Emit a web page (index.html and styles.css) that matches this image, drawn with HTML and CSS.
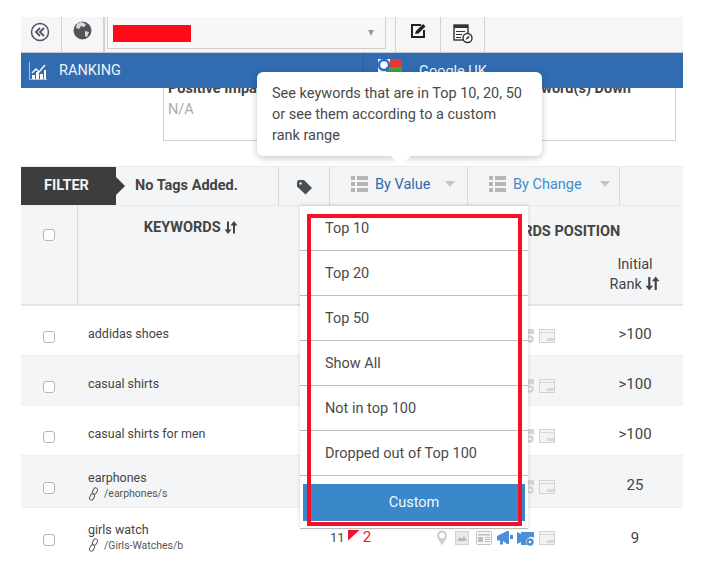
FILE: index.html
```html
<!DOCTYPE html>
<html lang="en">
<head>
  <meta charset="UTF-8" />
  <title>Ranking</title>
  <link rel="stylesheet" href="styles.css">
</head>
<body>
  <svg class="sprites" width="0" height="0">
    <symbol id="sort" viewBox="0 0 14 14">
      <path d="M3 1h2v8h2.500L4 13.500.5 9H3zM9 13V5H6.500L10 .5 13.500 5H11v8z" fill="currentColor"/>
    </symbol>
    <symbol id="link" viewBox="0 0 11 14">
      <g fill="none" stroke="#555" stroke-width="1">
        <rect x="5" y=".8" width="4" height="6.500" rx="2" transform="rotate(28 7 4)"/>
        <rect x="2" y="6.700" width="4" height="6.500" rx="2" transform="rotate(28 4 10)"/>
      </g>
    </symbol>
    <symbol id="list" viewBox="0 0 17 16">
      <path d="M0 0h4v4H0zM6 0h11v4H6zM0 6h4v4H0zM6 6h11v4H6zM0 12h4v4H0zM6 12h11v4H6z" fill="#b5b5b5"/>
    </symbol>
    <symbol id="pin" viewBox="0 0 12 16">
      <path d="M6 .5a5 5 0 0 1 5 5c0 3-3 6-5 10-2-4-5-7-5-10a5 5 0 0 1 5-5z" fill="#cfcfcf"/>
      <circle cx="6" cy="5.500" r="2.800" fill="#fff"/>
    </symbol>
    <symbol id="image" viewBox="0 0 14 14">
      <rect x=".5" y=".5" width="13" height="13" fill="#e9e9e9" stroke="#d2d2d2"/>
      <path d="M2 10l3-4 2 2 2-3 3 5z" fill="#b8b8b8"/>
    </symbol>
    <symbol id="news" viewBox="0 0 16 14">
      <rect x=".5" y=".5" width="15" height="13" rx="1" fill="#f6f6f6" stroke="#c4c4c4"/>
      <path d="M2 3h12v1.500H2zM2 6h5v5H2zM9 6h5v1H9zM9 8h5v1H9zM9 10h5v1H9z" fill="#bdbdbd"/>
    </symbol>
    <symbol id="horn" viewBox="0 0 16 14">
      <path d="M0 5l10-5h2v13h-2L6 10v3.500H3V9.500H0z" fill="currentColor"/>
      <path d="M13 4h3v4h-3z" fill="currentColor"/>
    </symbol>
    <symbol id="video" viewBox="0 0 17 15">
      <path d="M0 1l4 2V1h13v6a5 5 0 0 0-7 7H4v-3l-4 2z" fill="currentColor"/>
      <circle cx="13" cy="11" r="3.700" fill="currentColor"/>
      <circle cx="13" cy="11" r="1.300" fill="#fff"/>
    </symbol>
    <symbol id="window" viewBox="0 0 16 14">
      <rect x=".5" y=".5" width="15" height="13" fill="#f3f3f3" stroke="#d2d2d2"/>
      <path d="M1 3h14v1H1zM8 9h7v3H8z" fill="#d8d8d8"/>
    </symbol>
  </svg>

  <div class="app">
    <div class="toolbar">
      <div class="tool tool-back">
        <svg width="20" height="20" viewBox="0 0 20 20">
          <circle cx="10" cy="10" r="8.500" fill="none" stroke="#4d5560" stroke-width="1.500"/>
          <path d="M10 6l-4 4 4 4M14 6l-4 4 4 4" fill="none" stroke="#4d5560" stroke-width="1.800"/>
        </svg>
      </div>
      <div class="tool tool-globe">
        <svg width="19" height="19" viewBox="0 0 19 19">
          <circle cx="9.500" cy="9.500" r="9" fill="#50555c"/>
          <path d="M8 1c2 1 4 1 5 3l-2 2-3-1-2 3-3-1 1-4zM12 10l4 1-2 5-2-1z" fill="#d8dade"/>
        </svg>
      </div>
      <div class="select-wrap">
        <div class="select-box">
          <span class="redacted"></span>
          <span class="caret caret-dark"></span>
        </div>
      </div>
      <div class="tool tool-edit">
        <svg width="17" height="17" viewBox="0 0 17 17">
          <path d="M1 2h10v2H3v10h10V8h2v8H1z" fill="#222"/>
          <path d="M6 9l7-7 2.500 2.500-7 7L5 12z" fill="#222"/>
        </svg>
      </div>
      <div class="tool tool-report">
        <svg width="20" height="20" viewBox="0 0 20 20">
          <rect x="1" y="1" width="14" height="15" fill="none" stroke="#333" stroke-width="1.400"/>
          <path d="M1 1h14v3H1zM3 7h9v1H3zM3 10h6v1H3zM3 13h5v1H3z" fill="#333"/>
          <circle cx="14.500" cy="14" r="4.500" fill="#fff" stroke="#333" stroke-width="1.400"/>
          <path d="M12.500 16l1.500-3 3-1.500-1.500 3z" fill="#333"/>
        </svg>
      </div>
    </div>

    <div class="bluebar">
      <div class="bar-ranking">
        <svg width="18" height="19" viewBox="0 0 18 19">
          <path d="M.5 1v17.500H18" fill="none" stroke="#a9c4e2"/>
          <path d="M3 12l4-4 3 3 6-7" fill="none" stroke="#fff" stroke-width="1.400"/>
          <path d="M3 14h3v4H3zM7 11h3v7H7zM11 13h3v5h-3zM15 9h2v9h-2z" fill="#fff"/>
        </svg>
        <span>RANKING</span>
      </div>
      <div class="bar-engine">
        <svg width="24" height="16" viewBox="0 0 24 16">
          <rect width="24" height="16" fill="#fff"/>
          <path d="M12 0h12v8H12z" fill="#e53935"/>
          <path d="M8 8h16v8H8z" fill="#43a047"/>
          <circle cx="6" cy="6" r="5" fill="none" stroke="#2a6fd0" stroke-width="2.500"/>
        </svg>
        <span>Google UK</span>
      </div>
    </div>

    <div class="summary">
      <div class="summary-card">
        <div>
          <div class="summary-title">Positive Impact</div>
          <div class="summary-value">N/A</div>
        </div>
        <div class="summary-title">Keyword(s) Down</div>
      </div>
    </div>

    <div class="filterbar">
      <div class="filter-label">FILTER</div>
      <div class="filter-tags">No Tags Added.</div>
      <div class="filter-tag-icon">
        <svg width="15" height="15" viewBox="0 0 15 15">
          <path d="M0 1.500L1.500 0H7l8 8-6.500 6.500-8.500-8z" fill="#4b4f55"/>
          <circle cx="3.500" cy="3.500" r="1.200" fill="#f4f5f7"/>
        </svg>
      </div>
      <div class="filter-drop filter-value">
        <svg class="list-icon"><use href="#list"/></svg>
        <span>By Value</span>
        <span class="caret"></span>
      </div>
      <div class="filter-drop filter-change">
        <svg class="list-icon"><use href="#list"/></svg>
        <span>By Change</span>
        <span class="caret"></span>
      </div>
    </div>

    <div class="table-head">
      <div class="cell-check head-check"><input type="checkbox" /></div>
      <div class="head-keywords">KEYWORDS <svg class="sort"><use href="#sort"/></svg></div>
      <div class="head-position">KEYWORDS POSITION</div>
      <div class="head-initial">Initial<br />Rank <svg class="sort sort-big"><use href="#sort"/></svg></div>
    </div>

    <div class="row">
      <div class="cell-check"><input type="checkbox" /></div>
      <div class="cell-keyword">addidas shoes</div>
      <div class="cell-position">
        <svg class="i-pin"><use href="#pin"/></svg><svg class="i-image"><use href="#image"/></svg><svg class="i-news"><use href="#news"/></svg><svg class="i-horn"><use href="#horn"/></svg><svg class="i-video"><use href="#video"/></svg><svg class="i-window"><use href="#window"/></svg>
      </div>
      <div class="cell-rank">&gt;100</div>
    </div>
    <div class="row row-alt">
      <div class="cell-check"><input type="checkbox" /></div>
      <div class="cell-keyword">casual shirts</div>
      <div class="cell-position">
        <svg class="i-pin"><use href="#pin"/></svg><svg class="i-image"><use href="#image"/></svg><svg class="i-news"><use href="#news"/></svg><svg class="i-horn"><use href="#horn"/></svg><svg class="i-video"><use href="#video"/></svg><svg class="i-window"><use href="#window"/></svg>
      </div>
      <div class="cell-rank">&gt;100</div>
    </div>
    <div class="row">
      <div class="cell-check"><input type="checkbox" /></div>
      <div class="cell-keyword">casual shirts for men</div>
      <div class="cell-position">
        <svg class="i-pin"><use href="#pin"/></svg><svg class="i-image"><use href="#image"/></svg><svg class="i-news"><use href="#news"/></svg><svg class="i-horn"><use href="#horn"/></svg><svg class="i-video"><use href="#video"/></svg><svg class="i-window"><use href="#window"/></svg>
      </div>
      <div class="cell-rank">&gt;100</div>
    </div>
    <div class="row row-alt row-tall">
      <div class="cell-check"><input type="checkbox" /></div>
      <div class="cell-keyword keyword-two">
        earphones
        <div class="keyword-url"><svg class="i-link"><use href="#link"/></svg>/earphones/s</div>
      </div>
      <div class="cell-position">
        <svg class="i-pin"><use href="#pin"/></svg><svg class="i-image"><use href="#image"/></svg><svg class="i-news"><use href="#news"/></svg><svg class="i-horn"><use href="#horn"/></svg><svg class="i-video"><use href="#video"/></svg><svg class="i-window"><use href="#window"/></svg>
      </div>
      <div class="cell-rank">25</div>
    </div>
    <div class="row row-tall row-last">
      <div class="cell-check"><input type="checkbox" /></div>
      <div class="cell-keyword keyword-two">
        girls watch
        <div class="keyword-url"><svg class="i-link"><use href="#link"/></svg>/Girls-Watches/b</div>
      </div>
      <div class="cell-position position-top">
        <div class="pos-change">11 <span class="flag"></span> <span class="pos-down">2</span></div>
        <svg class="i-pin"><use href="#pin"/></svg><svg class="i-image"><use href="#image"/></svg><svg class="i-news"><use href="#news"/></svg><svg class="i-horn"><use href="#horn"/></svg><svg class="i-video"><use href="#video"/></svg><svg class="i-window"><use href="#window"/></svg>
      </div>
      <div class="cell-rank">9</div>
    </div>

    <!-- overlays -->
    <div class="tooltip">See keywords that are in Top 10, 20, 50 or see them according to a custom rank range</div>

    <div class="dropdown">
      <div class="drop-item">Top 10</div>
      <div class="drop-item">Top 20</div>
      <div class="drop-item">Top 50</div>
      <div class="drop-item">Show All</div>
      <div class="drop-item">Not in top 100</div>
      <div class="drop-item">Dropped out of Top 100</div>
      <div class="drop-custom"><button>Custom</button></div>
    </div>

    <div class="red-box"></div>
  </div>
</body>
</html>
```

FILE: styles.css
```css
* {
  box-sizing: border-box;
}

body {
  margin: 0;
  background: white;
  font-family: Roboto, sans-serif;
  color: #444;
}

.sprites {
  position: absolute;
}

.app {
  position: relative;
  width: 662px;
  margin: 17px 0 0 21px;
}

/* toolbar */
.toolbar {
  display: flex;
  height: 35px;
  background: #f6f6f6;
}

.tool {
  display: flex;
  justify-content: center;
  padding-top: 5px;
  border-right: 1px solid #d2d2d2;
}

.tool-back {
  width: 41px;
  padding-right: 3px;
}

.tool-globe {
  width: 42px;
  padding-top: 4px;
}

.tool-edit {
  width: 46px;
  padding: 5px 0 0 1px;
  border-left: 1px solid #d2d2d2;
}

.tool-report {
  width: 44px;
  padding-top: 7px;
}

.select-wrap {
  width: 291px;
  padding: 0 9px 1px 2px;
  border-left: 1px solid #d2d2d2;
}

.select-box {
  display: flex;
  align-items: center;
  justify-content: space-between;
  height: 32px;
  padding: 0 11px 0 5px;
  background: #f8f8f8;
  border: 1px solid #d0d0d0;
  border-top: none;
}

.redacted {
  width: 78px;
  height: 17px;
  margin-top: 2px;
  background: #ff0a1a;
}

.caret {
  width: 0;
  height: 0;
  border-left: 5.500px solid transparent;
  border-right: 5.500px solid transparent;
  border-top: 6px solid #c4c4c4;
}

.caret-dark {
  border-left-width: 3.500px;
  border-right-width: 3.500px;
  border-top: 6px solid #999;
}

/* blue bar */
.bluebar {
  position: relative;
  z-index: 1;
  display: flex;
  height: 36px;
  background: #316cb0;
  border-top: 1px solid #c3ccd6;
  color: #eef3f9;
  font-size: 14.500px;
}

.bar-ranking {
  display: flex;
  align-items: center;
  gap: 12px;
  width: 343px;
  padding-left: 8px;
  border-right: 1px solid #2a5f9c;
}

.bar-engine {
  display: flex;
  gap: 17px;
  padding: 6px 0 0 14px;
}

.bar-engine span {
  padding-top: 4px;
}

/* summary card, top part sits under the blue bar */
.summary {
  display: flex;
  align-items: flex-end;
  height: 53px;
  overflow: hidden;
  padding: 0 7px 0 142px;
}

.summary-card {
  display: flex;
  justify-content: space-between;
  flex-shrink: 0;
  width: 513px;
  height: 63px;
  padding: 2px 44px 0 4px;
  border: 1px solid #cfcfcf;
  border-top: none;
}

.summary-title {
  font-size: 14.500px;
  font-weight: 700;
  color: #444;
}

.summary-value {
  margin-top: 4px;
  font-size: 14.500px;
  color: #aaa;
}

/* filter */
.filterbar {
  display: flex;
  align-items: stretch;
  height: 40px;
  margin-top: 25px;
  background: #f4f5f7;
  border-top: 1px solid #eaeaea;
  border-bottom: 1px solid #eaeaea;
}

.filter-label {
  position: relative;
  width: 95px;
  padding-left: 23px;
  background: #3d3d3d;
  color: #f2f2f2;
  font-size: 14.500px;
  font-weight: 700;
  line-height: 37px;
}

.filter-label:after {
  content: "";
  position: absolute;
  left: 95px;
  top: 10px;
  border-top: 9px solid transparent;
  border-bottom: 9px solid transparent;
  border-left: 9px solid #3d3d3d;
}

.filter-tags {
  width: 163px;
  padding-left: 19px;
  border-right: 1px solid #d8d8d8;
  font-size: 14.500px;
  font-weight: 700;
  line-height: 38px;
}

.filter-tag-icon {
  width: 51px;
  padding: 13px 0 0 18px;
  border-right: 1px solid #d8d8d8;
}

.filter-drop {
  display: flex;
  align-items: center;
  gap: 7px;
  padding-bottom: 4px;
  font-size: 14.500px;
  border-right: 1px solid #d8d8d8;
}

.filter-value {
  width: 138px;
  padding-left: 21px;
  color: #2a6ca8;
}

.filter-change {
  width: 152px;
  padding-left: 21px;
  color: #3f8ccb;
}

.filter-drop .caret {
  margin-left: 7px;
}

.filter-change .caret {
  margin-left: 11px;
}

.list-icon {
  width: 17px;
  height: 16px;
}

/* table */
.table-head,
.row {
  display: grid;
  grid-template-columns: 57px 226px 283px 96px;
}

.table-head {
  height: 100px;
  background: #f4f5f7;
  border-bottom: 2px solid #e4e4e4;
}

.cell-check {
  display: flex;
  align-items: center;
  justify-content: center;
  padding: 12px 1px 0 0;
}

.cell-check input {
  appearance: none;
  width: 12px;
  height: 12px;
  margin: 0;
  background: white;
  border: 1px solid #b5b5b5;
  border-radius: 3px;
}

.head-check {
  align-items: flex-start;
  padding-top: 23px;
  border-right: 1px solid #d8d8d8;
}

.head-keywords {
  padding-top: 13px;
  text-align: center;
  font-size: 14.500px;
  font-weight: 700;
}

.sort {
  width: 14px;
  height: 15px;
  vertical-align: -3px;
  color: #444;
}

.sort-big {
  width: 15px;
  height: 17px;
  vertical-align: -3px;
}

.head-position {
  padding: 17px 0 0 170px;
  white-space: nowrap;
  font-size: 14.500px;
  font-weight: 700;
}

.head-initial {
  padding-top: 49px;
  text-align: center;
  font-size: 14.500px;
  line-height: 20px;
}

.row {
  height: 50px;
  align-items: center;
  border-bottom: 1px solid #eeeeee;
  font-size: 12.500px;
}

.row-alt {
  background: #f4f5f7;
}

.row-tall {
  height: 52px;
}

.row-last {
  border-bottom: none;
}

.cell-keyword {
  padding: 6px 0 0 10px;
  line-height: 16px;
}

.keyword-two {
  padding-top: 8px;
}

.row-last .keyword-two {
  padding-top: 6px;
}

.keyword-url {
  display: flex;
  align-items: center;
  gap: 5px;
  font-size: 10.500px;
  line-height: 15px;
  color: #555;
}

.i-link {
  width: 11px;
  height: 14px;
  flex-shrink: 0;
}

.cell-position {
  position: relative;
  display: flex;
  align-items: center;
  justify-content: flex-end;
  padding: 10px 32px 0 0;
  color: #d4d4d4;
}

.position-top {
  align-self: start;
  padding-top: 22px;
  color: #4a90d9;
}

.pos-change {
  position: absolute;
  left: 26px;
  top: 20px;
  display: flex;
  align-items: center;
  gap: 3px;
  font-size: 13px;
  color: #444;
}

.flag {
  width: 12px;
  height: 11px;
  margin-top: -3px;
  background: #f01528;
  clip-path: polygon(0 0, 100% 0, 0 100%);
}

.pos-down {
  font-size: 15px;
  color: #f01528;
}

.i-pin {
  width: 12px;
  height: 16px;
  margin-right: 7px;
}

.i-image {
  width: 14px;
  height: 14px;
  margin-right: 7px;
}

.i-news {
  width: 16px;
  height: 14px;
  margin-right: 5px;
}

.i-horn {
  width: 16px;
  height: 14px;
  margin-right: 4px;
}

.i-video {
  width: 17px;
  height: 15px;
  margin-right: 5px;
}

.i-window {
  width: 16px;
  height: 14px;
}

.cell-rank {
  padding-top: 7px;
  text-align: center;
  font-size: 15px;
}

/* overlays */
.tooltip {
  position: absolute;
  z-index: 3;
  left: 236px;
  top: 55px;
  width: 285px;
  height: 84px;
  padding: 11px 15px;
  background: white;
  border-radius: 6px;
  box-shadow: 0 2px 7px rgba(0, 0, 0, 0.22);
  font-size: 14.500px;
  line-height: 21px;
  color: #4a4a4a;
}

.tooltip:after {
  content: "";
  position: absolute;
  left: 134px;
  top: 84px;
  border-left: 10px solid transparent;
  border-right: 10px solid transparent;
  border-top: 10px solid white;
}

.dropdown {
  position: absolute;
  z-index: 2;
  left: 279px;
  top: 189px;
  width: 228px;
  height: 323px;
  background: white;
  border-bottom: 1px solid #bbb;
  box-shadow: 0 -1px 4px rgba(0, 0, 0, 0.15);
}

.drop-item {
  height: 45px;
  padding: 14px 0 0 25px;
  border-bottom: 1px solid #bdbdbd;
  font-size: 14.500px;
  color: #4a4a4a;
}

.drop-custom {
  padding: 8px 3px 0;
}

.drop-custom button {
  display: block;
  width: 100%;
  height: 37px;
  padding: 0;
  background: #3a87c9;
  color: #f2f7fb;
  font: 14.500px Roboto, sans-serif;
  border: none;
}

.red-box {
  position: absolute;
  z-index: 4;
  left: 286px;
  top: 197px;
  width: 215px;
  height: 312px;
  border: 4px solid #f5102a;
}
```
